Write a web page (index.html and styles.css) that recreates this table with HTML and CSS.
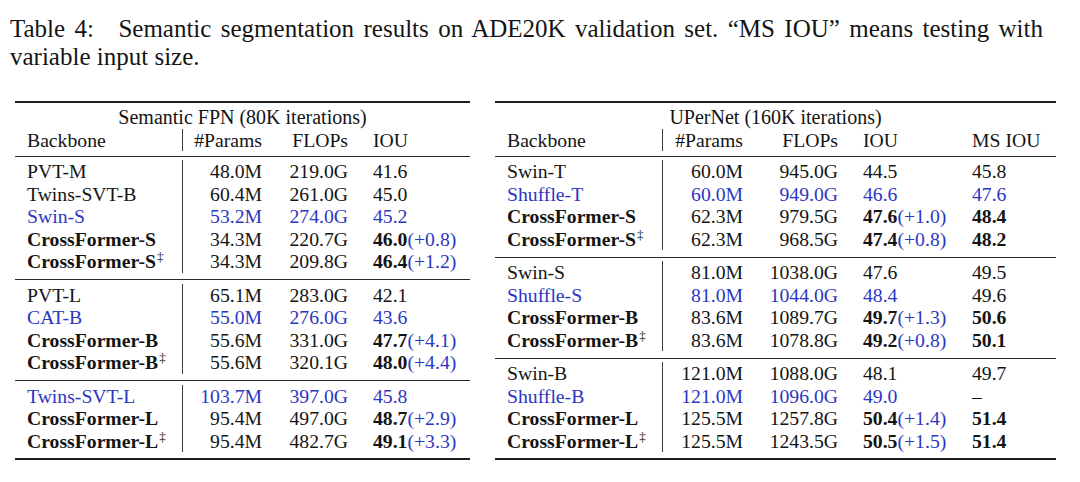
FILE: index.html
```html
<!DOCTYPE html>
<html>
<head>
<meta charset="utf-8">
<link rel="stylesheet" href="styles.css">
</head>
<body>
<div class="caption">
  <span class="cap-line cap-first"><span class="cap-label">Table 4:</span> Semantic segmentation results on ADE20K validation set. “MS IOU” means testing with</span>
  <span class="cap-line">variable input size.</span>
</div>

<div class="tables">
  <div class="tbl t-fpn">
    <div class="rule thick top"></div>
    <div class="group">Semantic FPN (80K iterations)</div>
    <div class="row"><span class="c-name">Backbone</span><span class="c-num">#Params</span><span class="c-num">FLOPs</span><span class="c-iou">IOU</span></div>
    <div class="rule head"></div>
    <div class="sec">
      <div class="row"><span class="c-name">PVT-M</span><span class="c-num">48.0M</span><span class="c-num">219.0G</span><span class="c-iou">41.6</span></div>
      <div class="row"><span class="c-name">Twins-SVT-B</span><span class="c-num">60.4M</span><span class="c-num">261.0G</span><span class="c-iou">45.0</span></div>
      <div class="row blue"><span class="c-name">Swin-S</span><span class="c-num">53.2M</span><span class="c-num">274.0G</span><span class="c-iou">45.2</span></div>
      <div class="row"><span class="c-name b">CrossFormer-S</span><span class="c-num">34.3M</span><span class="c-num">220.7G</span><span class="c-iou"><b>46.0</b><span class="gain">(+0.8)</span></span></div>
      <div class="row"><span class="c-name b">CrossFormer-S<span class="dag">‡</span></span><span class="c-num">34.3M</span><span class="c-num">209.8G</span><span class="c-iou"><b>46.4</b><span class="gain">(+1.2)</span></span></div>
    </div>
    <div class="rule"></div>
    <div class="sec">
      <div class="row"><span class="c-name">PVT-L</span><span class="c-num">65.1M</span><span class="c-num">283.0G</span><span class="c-iou">42.1</span></div>
      <div class="row blue"><span class="c-name">CAT-B</span><span class="c-num">55.0M</span><span class="c-num">276.0G</span><span class="c-iou">43.6</span></div>
      <div class="row"><span class="c-name b">CrossFormer-B</span><span class="c-num">55.6M</span><span class="c-num">331.0G</span><span class="c-iou"><b>47.7</b><span class="gain">(+4.1)</span></span></div>
      <div class="row"><span class="c-name b">CrossFormer-B<span class="dag">‡</span></span><span class="c-num">55.6M</span><span class="c-num">320.1G</span><span class="c-iou"><b>48.0</b><span class="gain">(+4.4)</span></span></div>
    </div>
    <div class="rule"></div>
    <div class="sec">
      <div class="row blue"><span class="c-name">Twins-SVT-L</span><span class="c-num">103.7M</span><span class="c-num">397.0G</span><span class="c-iou">45.8</span></div>
      <div class="row"><span class="c-name b">CrossFormer-L</span><span class="c-num">95.4M</span><span class="c-num">497.0G</span><span class="c-iou"><b>48.7</b><span class="gain">(+2.9)</span></span></div>
      <div class="row"><span class="c-name b">CrossFormer-L<span class="dag">‡</span></span><span class="c-num">95.4M</span><span class="c-num">482.7G</span><span class="c-iou"><b>49.1</b><span class="gain">(+3.3)</span></span></div>
    </div>
    <div class="rule thick bottom"></div>
  </div>

  <div class="tbl t-uper">
    <div class="rule thick top"></div>
    <div class="group">UPerNet (160K iterations)</div>
    <div class="row"><span class="c-name">Backbone</span><span class="c-num">#Params</span><span class="c-num">FLOPs</span><span class="c-iou">IOU</span><span class="c-ms">MS IOU</span></div>
    <div class="rule head"></div>
    <div class="sec">
      <div class="row"><span class="c-name">Swin-T</span><span class="c-num">60.0M</span><span class="c-num">945.0G</span><span class="c-iou">44.5</span><span class="c-ms">45.8</span></div>
      <div class="row blue"><span class="c-name">Shuffle-T</span><span class="c-num">60.0M</span><span class="c-num">949.0G</span><span class="c-iou">46.6</span><span class="c-ms">47.6</span></div>
      <div class="row"><span class="c-name b">CrossFormer-S</span><span class="c-num">62.3M</span><span class="c-num">979.5G</span><span class="c-iou"><b>47.6</b><span class="gain">(+1.0)</span></span><span class="c-ms b">48.4</span></div>
      <div class="row"><span class="c-name b">CrossFormer-S<span class="dag">‡</span></span><span class="c-num">62.3M</span><span class="c-num">968.5G</span><span class="c-iou"><b>47.4</b><span class="gain">(+0.8)</span></span><span class="c-ms b">48.2</span></div>
    </div>
    <div class="rule"></div>
    <div class="sec">
      <div class="row"><span class="c-name">Swin-S</span><span class="c-num">81.0M</span><span class="c-num">1038.0G</span><span class="c-iou">47.6</span><span class="c-ms">49.5</span></div>
      <div class="row blue"><span class="c-name">Shuffle-S</span><span class="c-num">81.0M</span><span class="c-num">1044.0G</span><span class="c-iou">48.4</span><span class="c-ms ink">49.6</span></div>
      <div class="row"><span class="c-name b">CrossFormer-B</span><span class="c-num">83.6M</span><span class="c-num">1089.7G</span><span class="c-iou"><b>49.7</b><span class="gain">(+1.3)</span></span><span class="c-ms b">50.6</span></div>
      <div class="row"><span class="c-name b">CrossFormer-B<span class="dag">‡</span></span><span class="c-num">83.6M</span><span class="c-num">1078.8G</span><span class="c-iou"><b>49.2</b><span class="gain">(+0.8)</span></span><span class="c-ms b">50.1</span></div>
    </div>
    <div class="rule"></div>
    <div class="sec">
      <div class="row"><span class="c-name">Swin-B</span><span class="c-num">121.0M</span><span class="c-num">1088.0G</span><span class="c-iou">48.1</span><span class="c-ms">49.7</span></div>
      <div class="row blue"><span class="c-name">Shuffle-B</span><span class="c-num">121.0M</span><span class="c-num">1096.0G</span><span class="c-iou">49.0</span><span class="c-ms ink">–</span></div>
      <div class="row"><span class="c-name b">CrossFormer-L</span><span class="c-num">125.5M</span><span class="c-num">1257.8G</span><span class="c-iou"><b>50.4</b><span class="gain">(+1.4)</span></span><span class="c-ms b">51.4</span></div>
      <div class="row"><span class="c-name b">CrossFormer-L<span class="dag">‡</span></span><span class="c-num">125.5M</span><span class="c-num">1243.5G</span><span class="c-iou"><b>50.5</b><span class="gain">(+1.5)</span></span><span class="c-ms b">51.4</span></div>
    </div>
    <div class="rule thick bottom"></div>
  </div>
</div>
</body>
</html>
```

FILE: styles.css
```css
html, body {
  margin: 0;
  padding: 0;
  background: #ffffff;
}

body {
  padding-top: 15px;
  font-family: "Liberation Serif", "Times New Roman", serif;
  color: #141414;
}

.caption {
  margin-left: 10px;
  width: 1033px;
  font-size: 25px;
  line-height: 28px;
}

.cap-line {
  display: block;
}

.cap-first {
  text-align: justify;
  text-align-last: justify;
}

.cap-label {
  margin-right: 15px;
}

.tables {
  display: flex;
  gap: 25px;
  margin: 30px 0 0 15px;
  font-size: 19.7px;
}

.t-fpn {
  width: 455px;
}

.t-uper {
  width: 561px;
}

.rule {
  height: 1px;
  background: #2a2a2a;
  margin: 6.5px 0 3.5px;
}

.rule.head {
  margin: 5px 0 3px;
}

.rule.thick {
  height: 2px;
  background: #1e1e1e;
}

.rule.top {
  margin: 0 0 3px;
}

.rule.bottom {
  margin: 6.4px 0 0;
}

.group {
  text-align: center;
  line-height: 22.5px;
  height: 22.5px;
  font-size: 20px;
}

.row {
  display: grid;
  line-height: 22.5px;
  height: 22.5px;
  white-space: nowrap;
}

.t-fpn .row {
  grid-template-columns: 168px 79px 86px 1fr;
}

.t-uper .row {
  grid-template-columns: 168px 80px 95px 122px 1fr;
}

.c-name {
  padding-left: 12px;
  border-right: 1px solid #3c3c3c;
}

.c-num {
  text-align: right;
}

.c-iou {
  padding-left: 25px;
}

.c-ms {
  padding-left: 12px;
}

.b,
b {
  font-weight: bold;
}

.blue {
  color: #2b36c2;
}

.gain {
  color: #2b36c2;
  font-weight: normal;
}

.ink {
  color: #141414;
}

.dag {
  font-size: 13px;
  font-weight: normal;
  vertical-align: 7px;
  line-height: 0;
  margin-left: 1px;
}
```
